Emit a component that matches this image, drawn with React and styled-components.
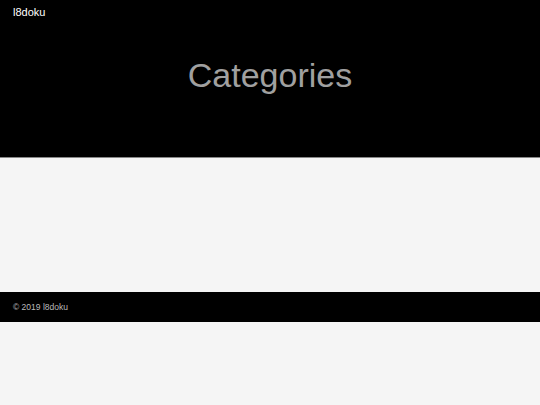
import React from "react";
import styled, { createGlobalStyle } from "styled-components";

const GlobalStyle = createGlobalStyle`
  html, body {
    margin: 0;
    padding: 0;
    background: #f5f5f5;
    font-family: "Liberation Sans", Arial, sans-serif;
  }
`;

const Header = styled.header`
  background: #000;
  height: 157px;
  border-bottom: 1px solid #888;
  display: flex;
  flex-direction: column;
`;

const Brand = styled.div`
  color: #fff;
  font-size: 11px;
  padding: 6px 0 0 13px;
  line-height: 13px;
`;

const Title = styled.h1`
  margin: 0;
  padding-top: 36px;
  text-align: center;
  color: #a0a0a0;
  font-weight: normal;
  font-size: 34px;
  line-height: 40px;
`;

const Main = styled.main`
  height: 134px;
`;

const Footer = styled.footer`
  background: #000;
  height: 30px;
  display: flex;
  align-items: center;
  padding-left: 13px;
  color: #bbb;
  font-size: 8.5px;
`;

export default function App() {
  return (
    <>
      <GlobalStyle />
      <Header>
        <Brand>l8doku</Brand>
        <Title>Categories</Title>
      </Header>
      <Main />
      <Footer>© 2019 l8doku</Footer>
    </>
  );
}
